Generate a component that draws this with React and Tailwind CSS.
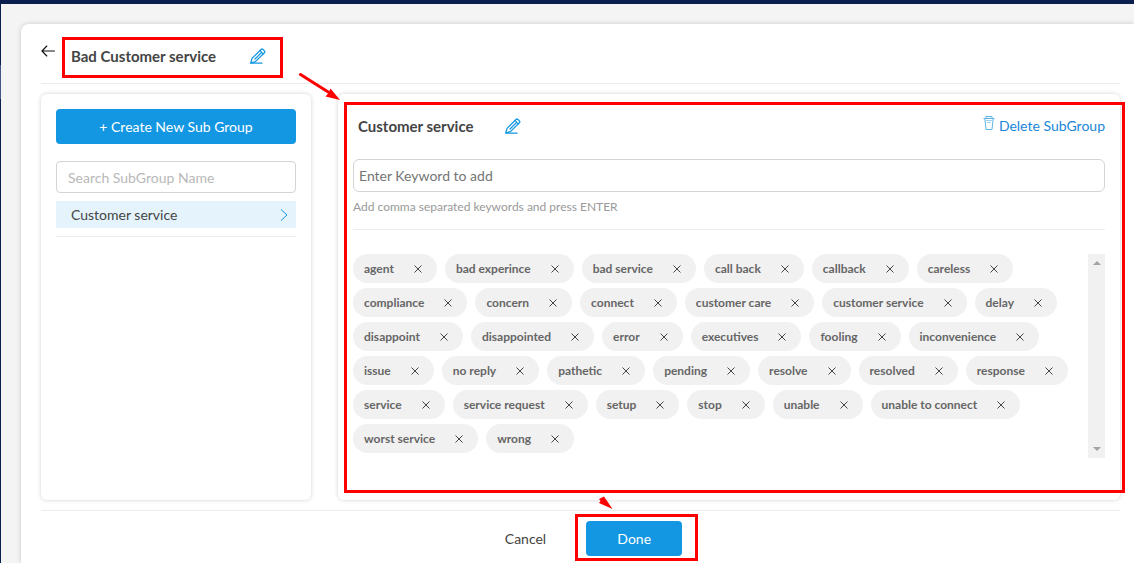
import React, { useState } from "react";

const INITIAL_KEYWORDS = [
  "agent", "bad experince", "bad service", "call back", "callback", "careless",
  "compliance", "concern", "connect", "customer care", "customer service", "delay",
  "disappoint", "disappointed", "error", "executives", "fooling", "inconvenience",
  "issue", "no reply", "pathetic", "pending", "resolve", "resolved", "response",
  "service", "service request", "setup", "stop", "unable", "unable to connect",
  "worst service", "wrong",
];

const BackIcon = () => (
  <svg width="14" height="12" viewBox="0 0 14 12" fill="none" stroke="#111" strokeWidth="1.1" strokeLinecap="round" strokeLinejoin="round">
    <path d="M13.5 6H1M5.8 1L1 6L5.8 11" />
  </svg>
);

const PencilIcon = () => (
  <svg width="16" height="16" viewBox="0 0 16 16" fill="none" stroke="#1497e2" strokeWidth="1.3" strokeLinejoin="round" strokeLinecap="round">
    <path d="M.8 14.8L2 10.4L11 1.5Q12 .5 13 1.5L14.4 2.9Q15.3 3.8 14.4 4.8L5.4 13.6Z" />
    <path d="M10 2.6L13.2 5.9M5 11L11.4 4.6M.8 15.2H12" />
  </svg>
);

const TrashIcon = () => (
  <svg width="12" height="14" viewBox="0 0 12 14" fill="none" stroke="#5bb5e8" strokeWidth="1">
    <path d="M3 2.5V.5H9V2.5M.5 2.5H11.5M1.8 2.5L3 13.5H9L10.2 2.5" />
    <path d="M3 4.5H9M4 6.5H8" strokeOpacity="0.6" />
  </svg>
);

const CloseIcon = () => (
  <svg width="8" height="8" viewBox="0 0 8 8" fill="none" stroke="#333" strokeWidth="0.9">
    <path d="M.5 .5L7.5 7.5M7.5 .5L.5 7.5" />
  </svg>
);

const Keyword = ({ label, onRemove }) => (
  <li className="flex h-[29px] items-center rounded-full bg-[#f1f1f1] pl-[11px] pr-[15px] text-xs font-bold text-[#666]">
    {label}
    <button type="button" aria-label={`Remove ${label}`} className="ml-5" onClick={onRemove}>
      <CloseIcon />
    </button>
  </li>
);

const App = () => {
  const [keywords, setKeywords] = useState(INITIAL_KEYWORDS);
  const [draft, setDraft] = useState("");

  const handleKeyDown = (e) => {
    if (e.key !== "Enter") return;
    const added = draft.split(",").map((k) => k.trim()).filter(Boolean);
    setKeywords([...keywords, ...added]);
    setDraft("");
  };

  return (
    <div className="flex min-h-screen flex-col overflow-hidden border-t-4 border-[#0b1f4f] bg-[#f4f4f4] font-['Lato',sans-serif] text-sm text-[#444]">
      <div className="flex flex-1">
        <div className="w-px bg-[#0b1f4f] pt-[61px]">
          <div className="h-[34px] bg-[#44568a]" />
        </div>
        <main className="ml-5 mt-5 flex-1 rounded-tl-lg bg-white pl-5 pr-[14px] shadow-[0_0_5px_rgba(0,0,0,0.18)]">
          <header className="relative flex h-[60px] items-start border-b border-[#ececec] pt-[13px]">
            <button type="button" aria-label="Back" className="mt-2">
              <BackIcon />
            </button>
            <div className="ml-[7px] flex h-[41px] w-[221px] items-center justify-between border-[3px] border-[#fe0000] pb-1 pl-[6px] pr-[14px]">
              <h1 className="text-[15px] leading-5 font-bold">Bad Customer service</h1>
              <button type="button" aria-label="Edit group name">
                <PencilIcon />
              </button>
            </div>
            <svg className="absolute left-[258px] top-[48px] z-10" width="44" height="30" viewBox="0 0 44 30" fill="#fe0000">
              <path d="M1.5 2.5L30 20.5" stroke="#fe0000" strokeWidth="3" strokeLinecap="round" />
              <path d="M31.5 16.5L41 28L26.5 24.5L29.5 21Z" />
            </svg>
          </header>

          <div className="mt-[10px] flex gap-[27px]">
            <aside className="w-[270px] shrink-0 rounded-md p-[15px] shadow-[0_0_4px_rgba(0,0,0,0.18)]">
              <button type="button" className="h-[35px] w-full rounded bg-[#1497e2] text-white">
                + Create New Sub Group
              </button>
              <input
                type="text"
                aria-label="Search SubGroup Name"
                placeholder="Search SubGroup Name"
                className="mt-[17px] h-8 w-full rounded border border-[#d4d4d4] px-[11px] placeholder:text-[#b8b8b8]"
              />
              <div className="mt-2 border-b border-[#ececec] pb-2">
                <button type="button" className="flex h-[27px] w-full items-center justify-between bg-[#e5f4fc] pl-[15px] pr-2">
                  Customer service
                  <svg width="8" height="12" viewBox="0 0 8 12" fill="none" stroke="#1497e2" strokeWidth="1">
                    <path d="M1 .5L7 6L1 11.5" />
                  </svg>
                </button>
              </div>
            </aside>

            <section className="relative min-w-0 flex-1 rounded-md px-[15px] pb-[42px] pt-[22px] shadow-[0_0_4px_rgba(0,0,0,0.18)]">
              <div className="pointer-events-none absolute -right-[5px] bottom-[7px] left-[6px] top-2 border-[3px] border-[#fe0000]" />
              <div className="flex items-center justify-between">
                <div className="flex w-[168px] items-center justify-between pl-[5px]">
                  <h2 className="text-[15px] leading-5 font-bold">Customer service</h2>
                  <button type="button" aria-label="Edit subgroup name">
                    <PencilIcon />
                  </button>
                </div>
                <button type="button" className="flex items-start gap-1 text-[#1a86d9]">
                  <TrashIcon />
                  Delete SubGroup
                </button>
              </div>
              <input
                type="text"
                id="keyword"
                placeholder="Enter Keyword to add"
                value={draft}
                onChange={(e) => setDraft(e.target.value)}
                onKeyDown={handleKeyDown}
                className="mt-[23px] block h-[33px] w-full rounded-md border border-[#d4d4d4] px-[5px] placeholder:text-[#757575]"
              />
              <label htmlFor="keyword" className="mt-[5px] block border-b border-[#ececec] pb-3 text-xs leading-5 text-[#999]">
                Add comma separated keywords and press ENTER
              </label>
              <div className="mt-6 flex h-[204px]">
                <ul className="flex flex-1 flex-wrap content-start gap-x-2 gap-y-[5px] overflow-hidden">
                  {keywords.map((keyword) => (
                    <Keyword
                      key={keyword}
                      label={keyword}
                      onRemove={() => setKeywords(keywords.filter((k) => k !== keyword))}
                    />
                  ))}
                </ul>
                <div className="flex w-[17px] flex-col items-center justify-between bg-[#f1f1f1] py-[7px]">
                  <svg width="8" height="4" viewBox="0 0 8 4" fill="#a3a3a3"><path d="M0 4L4 0L8 4Z" /></svg>
                  <svg width="8" height="4" viewBox="0 0 8 4" fill="#a3a3a3"><path d="M0 0L4 4L8 0Z" /></svg>
                </div>
              </div>
            </section>
          </div>

          <footer className="relative mt-[10px] flex justify-center border-t border-[#ececec] pb-[7px] pt-[10px]">
            <svg className="absolute left-[557px] -top-[15px]" width="15" height="14" viewBox="0 0 15 14" fill="#fe0000">
              <path d="M1 3L6 .5L14.5 13L1 7L2.5 5Z" />
            </svg>
            <div className="flex items-center gap-10 pl-[26px]">
              <button type="button" className="h-[35px]">Cancel</button>
              <div className="relative">
                <div className="pointer-events-none absolute -bottom-[5px] -left-[11px] -right-4 -top-[7px] border-[3px] border-[#fe0000]" />
                <button type="button" className="block h-[35px] w-24 rounded bg-[#1497e2] text-white">Done</button>
              </div>
            </div>
          </footer>
        </main>
      </div>
    </div>
  );
};

export default App;
